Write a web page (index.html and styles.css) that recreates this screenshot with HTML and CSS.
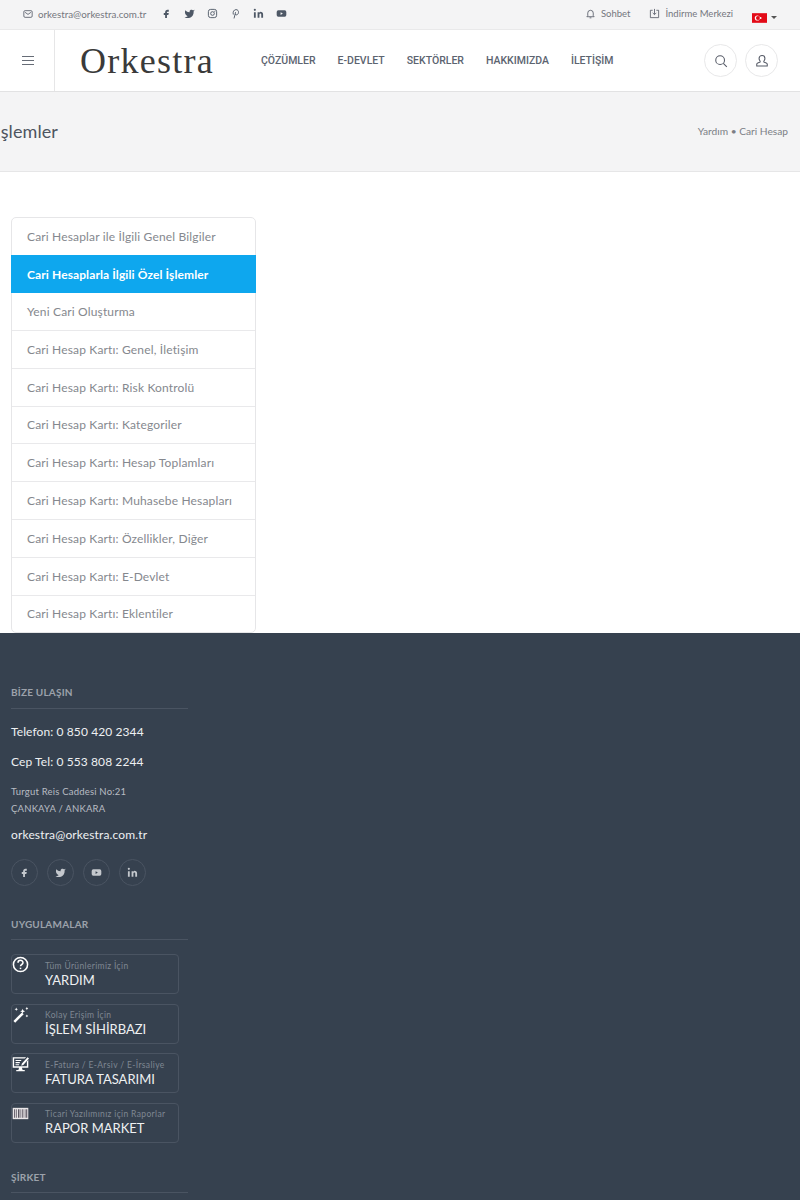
FILE: index.html
```html
<!DOCTYPE html>
<html lang="tr">

<head>
    <meta charset="UTF-8">
    <meta name="viewport" content="width=device-width, initial-scale=1.0">
    <title>Cari Hesaplarla İlgili Özel İşlemler</title>
    <link rel="stylesheet" href="styles.css">
</head>

<body>
    <svg class="defs" width="0" height="0">
        <symbol id="i-fb" viewBox="0 0 24 24"><path fill="currentColor" d="M14 8h3V4h-3c-2.8 0-5 2.2-5 5v2H6v4h3v7h4v-7h3l1-4h-4V9c0-.6.4-1 1-1z"/></symbol>
        <symbol id="i-tw" viewBox="0 0 24 24"><path fill="currentColor" d="M23 4a10.9 10.9 0 0 1-3 1.2 4.5 4.5 0 0 0-7.9 3v1A10.7 10.7 0 0 1 3 5s-4 9 5 13a11.6 11.6 0 0 1-7 2c9 5 20 0 20-11.5 0-.3 0-.6-.1-.8A7.7 7.7 0 0 0 23 4z"/></symbol>
        <symbol id="i-ig" viewBox="0 0 24 24"><g fill="none" stroke="currentColor" stroke-width="2"><rect x="3" y="3" width="18" height="18" rx="5"/><circle cx="12" cy="12" r="4"/></g><circle cx="17" cy="7" r="1.2" fill="currentColor"/></symbol>
        <symbol id="i-pin" viewBox="0 0 24 24"><path fill="none" stroke="currentColor" stroke-width="2" stroke-linecap="round" d="M9 22l3-12M7 13.500C5.500 9 8.500 3.500 13 3.500c4 0 6 3 5.500 6.500-.5 4-4 6.500-6.500 4.500"/></symbol>
        <symbol id="i-in" viewBox="0 0 24 24"><path fill="currentColor" d="M16 8a6 6 0 0 1 6 6v7h-4v-7a2 2 0 0 0-4 0v7h-4V9h4v1.500A5 5 0 0 1 16 8zM2 9h4v12H2z"/><circle cx="4" cy="4" r="2.300" fill="currentColor"/></symbol>
        <symbol id="i-yt" viewBox="0 0 24 24"><path fill="currentColor" fill-rule="evenodd" d="M5 5h14a3.500 3.500 0 0 1 3.500 3.500v7A3.500 3.500 0 0 1 19 19H5a3.500 3.500 0 0 1-3.500-3.500v-7A3.500 3.500 0 0 1 5 5zm5 4v6l5-3z"/></symbol>
    </svg>

    <div class="topbar">
        <div class="top-left">
            <span class="top-mail">
                <svg class="ico-mail" viewBox="0 0 24 24" fill="none" stroke="currentColor" stroke-width="2"><rect x="2" y="4" width="20" height="16" rx="3"/><path d="M5 8l7 5 7-5"/></svg>
                orkestra@orkestra.com.tr
            </span>
            <div class="top-social">
                <svg><use href="#i-fb"/></svg>
                <svg><use href="#i-tw"/></svg>
                <svg><use href="#i-ig"/></svg>
                <svg><use href="#i-pin"/></svg>
                <svg><use href="#i-in"/></svg>
                <svg><use href="#i-yt"/></svg>
            </div>
        </div>
        <div class="top-right">
            <span class="top-link">
                <svg viewBox="0 0 24 24" fill="none" stroke="currentColor" stroke-width="1.800"><path d="M6 17V11a6 6 0 0 1 12 0v6l2 2H4zM10 21.500h4"/></svg>
                Sohbet
            </span>
            <span class="top-link">
                <svg viewBox="0 0 24 24" fill="none" stroke="currentColor" stroke-width="1.800"><path d="M8 5H3v16h18V5h-5M12 2v12M8 10.500l4 4 4-4"/></svg>
                İndirme Merkezi
            </span>
            <span class="lang">
                <svg class="flag" viewBox="0 0 14 9"><rect width="14" height="9" fill="#e30a17"/><circle cx="5" cy="4.500" r="2.400" fill="#fff"/><circle cx="5.600" cy="4.500" r="1.900" fill="#e30a17"/><circle cx="8" cy="4.500" r="0.900" fill="#fff"/></svg>
                <span class="caret"></span>
            </span>
        </div>
    </div>

    <header class="header">
        <div class="burger">
            <span></span><span></span><span></span>
        </div>
        <a class="logo">Orkestra</a>
        <nav class="nav">
            <a>ÇÖZÜMLER</a>
            <a>E-DEVLET</a>
            <a>SEKTÖRLER</a>
            <a>HAKKIMIZDA</a>
            <a>İLETİŞİM</a>
        </nav>
        <div class="head-btns">
            <span class="round-btn">
                <svg viewBox="0 0 24 24" fill="none" stroke="currentColor" stroke-width="1.800"><circle cx="10.500" cy="10.500" r="7.500"/><path d="M16 16l6 6"/></svg>
            </span>
            <span class="round-btn">
                <svg viewBox="0 0 24 24" fill="none" stroke="currentColor" stroke-width="1.800"><path d="M12 2.500a5 5 0 0 1 5 5c0 3-2 4-2 6 0 1 5 1.500 6 3.500v3.500H3V17c1-2 6-2.500 6-3.500 0-2-2-3-2-6a5 5 0 0 1 5-5z"/></svg>
            </span>
        </div>
    </header>

    <div class="page-title">
        <div class="title-clip"><h1>Cari Hesaplarla İlgili Özel İşlemler</h1></div>
        <div class="crumbs">Yardım • Cari Hesap</div>
    </div>

    <main class="content">
        <ul class="side-list">
            <li>Cari Hesaplar ile İlgili Genel Bilgiler</li>
            <li class="active">Cari Hesaplarla İlgili Özel İşlemler</li>
            <li>Yeni Cari Oluşturma</li>
            <li>Cari Hesap Kartı: Genel, İletişim</li>
            <li>Cari Hesap Kartı: Risk Kontrolü</li>
            <li>Cari Hesap Kartı: Kategoriler</li>
            <li>Cari Hesap Kartı: Hesap Toplamları</li>
            <li>Cari Hesap Kartı: Muhasebe Hesapları</li>
            <li>Cari Hesap Kartı: Özellikler, Diğer</li>
            <li>Cari Hesap Kartı: E-Devlet</li>
            <li>Cari Hesap Kartı: Eklentiler</li>
        </ul>
    </main>

    <footer class="footer">
        <h4>BİZE ULAŞIN</h4>
        <p class="phone">Telefon: 0 850 420 2344</p>
        <p class="phone">Cep Tel: 0 553 808 2244</p>
        <p class="address">Turgut Reis Caddesi No:21<br>ÇANKAYA / ANKARA</p>
        <p class="mail">orkestra@orkestra.com.tr</p>
        <div class="foot-social">
            <span><svg><use href="#i-fb"/></svg></span>
            <span><svg><use href="#i-tw"/></svg></span>
            <span><svg><use href="#i-yt"/></svg></span>
            <span><svg><use href="#i-in"/></svg></span>
        </div>

        <h4 class="apps-head">UYGULAMALAR</h4>
        <div class="app-card">
            <svg class="app-ico" viewBox="0 0 24 24" fill="none" stroke="#fff" stroke-width="2.200"><circle cx="12" cy="12" r="10"/><path d="M8.500 9.500a3.500 3.500 0 0 1 7 0c0 2.500-3.500 2.500-3.500 5"/><path d="M12 16.500v2"/></svg>
            <small>Tüm Ürünlerimiz İçin</small>
            <strong>YARDIM</strong>
        </div>
        <div class="app-card">
            <svg class="app-ico" viewBox="0 0 24 24" fill="#fff"><path d="M2 21l12-12 2.500 2.500-12 12z"/><path d="M15 4l1 2.500 2.500 1-2.500 1-1 2.500-1-2.500-2.500-1 2.500-1zM6 2l.7 1.800 1.800.7-1.800.7L6 7l-.7-1.800-1.800-.7 1.800-.7zM21 1l.7 1.800 1.300.7-1.300.7L21 6l-.7-1.800-1.300-.7 1.300-.7zM21 12l.7 1.300 1.300.7-1.300.7-.7 1.300-.7-1.300-1.300-.7 1.300-.7z"/></svg>
            <small>Kolay Erişim İçin</small>
            <strong>İŞLEM SİHİRBAZI</strong>
        </div>
        <div class="app-card">
            <svg class="app-ico" viewBox="0 0 24 24"><path fill="#fff" fill-rule="evenodd" d="M1 3h19l-2 2H3v11h18V9l2-2v11H14l1 3h3v2H6v-2h3l1-3H1z"/><path fill="#fff" d="M5 7h8v1.500H5zM5 10h6v1.500H5zM5 13h5v1.500H5zM14 12l8-9 2 2-8 9-3 1z"/></svg>
            <small>E-Fatura / E-Arsiv / E-İrsaliye</small>
            <strong>FATURA TASARIMI</strong>
        </div>
        <div class="app-card">
            <svg class="app-ico" viewBox="0 0 24 24"><rect x="1" y="4" width="22" height="16" fill="#e9e6e8"/><path fill="#5a5560" d="M3 6h1.500v12H3zM6 6h1v12H6zM8.500 6h2v12h-2zM12 6h1v12h-1zM14.500 6h1.500v12h-1.500zM18 6h1v12h-1zM20 6h1.500v12H20z"/></svg>
            <small>Ticari Yazılımınız için Raporlar</small>
            <strong>RAPOR MARKET</strong>
        </div>

        <h4 class="company-head">ŞİRKET</h4>
    </footer>
</body>

</html>
```
FILE: styles.css
```css
* {
    box-sizing: border-box;
    margin: 0;
    padding: 0;
}

html,
body {
    height: 1200px;
    overflow: hidden;
}

body {
    background-color: #fff;
    font-family: "Lato", "Noto Sans", sans-serif;
    color: #74777e;
}

.defs {
    display: block;
}

/* top strip */
.topbar {
    display: flex;
    justify-content: space-between;
    align-items: center;
    height: 30px;
    padding: 0 23px 2px;
    background-color: #f4f4f5;
    border-bottom: 1px solid #e9e9ea;
    font-size: 9.800px;
}

.top-left,
.top-right {
    display: flex;
    align-items: center;
}

.top-mail {
    display: flex;
    align-items: center;
    gap: 5px;
}

.ico-mail {
    width: 10px;
    height: 10px;
    color: #555a66;
}

.top-social {
    display: flex;
    gap: 12px;
    margin-left: 15px;
    color: #4e5866;
}

.top-social svg {
    width: 11px;
    height: 11px;
}

.top-link {
    display: flex;
    align-items: center;
    gap: 5px;
    margin-right: 19px;
    font-size: 9.500px;
}

.top-link svg {
    width: 11px;
    height: 11px;
    color: #555a66;
}

.lang {
    display: flex;
    align-items: center;
    gap: 4px;
    margin-top: 4px;
    margin-bottom: -4px;
}

.flag {
    width: 15px;
    height: 10px;
}

.caret {
    border: 3px solid transparent;
    border-top-color: #555;
    border-bottom: 0;
}

/* main header */
.header {
    display: flex;
    align-items: center;
    height: 62px;
    background-color: #fff;
    border-bottom: 1px solid #e2e2e3;
}

.burger {
    display: flex;
    flex-direction: column;
    justify-content: center;
    gap: 3px;
    width: 55px;
    height: 100%;
    padding-left: 22px;
    padding-right: 20px;
    border-right: 1px solid #e6e6e7;
}

.burger span {
    height: 1px;
    background-color: #666c76;
}

.logo {
    width: 133px;
    margin-left: 25px;
    font-family: "Liberation Serif", serif;
    font-size: 36px;
    line-height: 1;
    letter-spacing: 1.250px;
    color: #3a3a3a;
    white-space: nowrap;
}

.nav {
    display: flex;
    gap: 22px;
    margin-left: 48px;
    font-family: "Roboto", sans-serif;
    font-size: 10.500px;
    font-weight: 500;
    color: #5c6470;
}

.head-btns {
    display: flex;
    gap: 8px;
    margin-left: auto;
    margin-right: 22px;
}

.round-btn {
    display: flex;
    align-items: center;
    justify-content: center;
    width: 33px;
    height: 33px;
    border: 1px solid #e8e8e9;
    border-radius: 50%;
    color: #555a66;
}

.round-btn svg {
    width: 14px;
    height: 14px;
}

/* page title */
.page-title {
    display: flex;
    justify-content: space-between;
    align-items: center;
    height: 80px;
    padding-right: 12px;
    padding-bottom: 1px;
    background-color: #f4f4f5;
    border-bottom: 1px solid #e6e6e7;
}

.title-clip {
    display: flex;
    justify-content: flex-end;
    width: 58px;
    white-space: nowrap;
}

.title-clip h1 {
    flex-shrink: 0;
    font-size: 18px;
    font-weight: 400;
    letter-spacing: 0.1px;
    color: #4e5560;
}

.crumbs {
    font-size: 10.200px;
    color: #7c7f86;
}

/* side list */
.content {
    height: 461px;
    padding: 45px 0 0 11px;
}

.side-list {
    width: 245px;
    height: 416px;
    list-style: none;
    background-color: #fff;
    border: 1px solid #e6e6e8;
    border-radius: 5px;
    font-size: 12px;
    letter-spacing: 0.16px;
}

.side-list li {
    display: flex;
    align-items: center;
    height: 37.800px;
    padding-left: 15px;
    border-top: 1px solid #e9e9eb;
    color: #85888e;
}

.side-list li:first-child {
    height: 37px;
    border-top: 0;
}

.side-list .active {
    height: 38px;
    margin: 0 -1px;
    padding-left: 16px;
    background-color: #0ea7ee;
    border-top: 0;
    font-weight: 700;
    letter-spacing: 0.1px;
    color: #fff;
}

.side-list .active + li {
    height: 37px;
    border-top: 0;
}

/* footer */
.footer {
    height: 567px;
    padding: 53px 0 0 11px;
    background-color: #36414f;
    color: #fff;
}

.footer h4 {
    width: 177px;
    height: 23px;
    border-bottom: 1px solid #4a5462;
    font-size: 10px;
    font-weight: 700;
    letter-spacing: 0.2px;
    color: #9ca2ab;
}

.phone {
    margin-top: 16px;
    font-size: 12px;
    line-height: 13px;
    letter-spacing: 0.1px;
    color: #eef0f2;
}

.phone + .phone {
    margin-top: 17px;
}

.address {
    margin-top: 15px;
    font-size: 9.500px;
    line-height: 17px;
    letter-spacing: 0.2px;
    color: #b8bcc3;
}

.mail {
    margin-top: 11px;
    font-size: 12px;
    line-height: 14px;
    letter-spacing: 0.15px;
    color: #eef0f2;
}

.foot-social {
    display: flex;
    gap: 9px;
    margin-top: 17px;
}

.foot-social span {
    display: flex;
    align-items: center;
    justify-content: center;
    width: 27px;
    height: 27px;
    border: 1px solid #4a5462;
    border-radius: 50%;
    color: #c4c8cd;
}

.foot-social svg {
    width: 11px;
    height: 11px;
}

.footer .apps-head {
    height: 22px;
    margin-top: 32px;
    margin-bottom: 14px;
}

.app-card {
    position: relative;
    display: flex;
    flex-direction: column;
    justify-content: center;
    width: 168px;
    height: 40px;
    margin-bottom: 9.500px;
    padding-left: 33px;
    border: 1px solid #4a5462;
    border-radius: 4px;
}

.app-card small {
    font-size: 8.500px;
    line-height: 11px;
    letter-spacing: 0.35px;
    color: #7f8792;
    white-space: nowrap;
}

.app-card strong {
    font-size: 13px;
    font-weight: 400;
    line-height: 16px;
    color: #eef0f2;
}

/* icon sticks over the card's top corner */
.app-ico {
    position: absolute;
    left: 0;
    top: 1px;
    width: 17px;
    height: 17px;
}

.footer .company-head {
    height: 22px;
    margin-top: 28px;
}
```
